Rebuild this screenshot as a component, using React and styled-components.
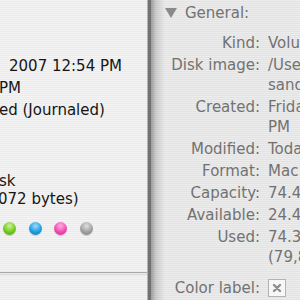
import React from "react"
import styled, { createGlobalStyle } from "styled-components"

const GlobalStyle = createGlobalStyle`
  html, body {
    margin: 0;
    padding: 0;
    overflow: hidden;
  }
  body {
    font-family: "DejaVu Sans", Verdana, sans-serif;
  }
`

const Screen = styled.div`
  display: flex;
  width: 300px;
  height: 300px;
  overflow: hidden;
`

// window in front, only its right part is visible
const FrontWindow = styled.div`
  flex: 0 0 147px;
  display: flex;
  flex-direction: column;
  border-right: 1px solid #b4b4b4;
  background: repeating-linear-gradient(to bottom, #f4f4f4 0 1px, #ebebeb 1px 2px);
  overflow: hidden;
  font-size: 15px;
  color: #161616;
`

const Group = styled.div`
  display: flex;
  flex-direction: column;
  margin-top: ${(p) => p.top}px;
  line-height: ${(p) => p.lh}px;
`

const Line = styled.div`
  white-space: nowrap;
  margin-left: ${(p) => p.indent || 0}px;
`

const Dots = styled.div`
  display: flex;
  gap: 12.5px;
  padding-left: 3px;
  margin-top: 14px;
`

const dotColors = {
  green: ["#cdf39a", "#72cb1e", "#4f9c12"],
  blue: ["#9edcfa", "#1d9de2", "#0e76b8"],
  pink: ["#ffb0e0", "#f24bb0", "#c82a88"],
  gray: ["#e0e0e0", "#a0a0a0", "#7c7c7c"],
}

const Dot = styled.span`
  width: 13px;
  height: 13px;
  border-radius: 50%;
  background: ${(p) => {
    const [a, b, c] = dotColors[p.color]
    return `radial-gradient(circle at 50% 30%, ${a} 0, ${b} 55%, ${c} 100%)`
  }};
  box-shadow: 0 1px 1px rgba(0, 0, 0, 0.15);
`

const Rule = styled.div`
  margin-top: 37px;
  height: 1px;
  border-top: 1px solid #a8a8a8;
  border-bottom: 1px solid #dcdcdc;
`

// inactive Get Info window behind
const InfoWindow = styled.div`
  flex: 1;
  display: flex;
  flex-direction: column;
  border-left: 3px solid #727272;
  background:
    linear-gradient(to right, rgba(0, 0, 0, 0.32), rgba(0, 0, 0, 0.12) 5px, rgba(0, 0, 0, 0) 14px),
    repeating-linear-gradient(to bottom, #ececec 0 1px, #e3e3e3 1px 2px);
  overflow: hidden;
  font-size: 15px;
  line-height: 20px;
  color: #727272;
`

const Header = styled.div`
  display: flex;
  align-items: center;
  gap: 8px;
  padding: 3px 0 0 14px;
`

const Triangle = styled.span`
  width: 0;
  height: 0;
  border-left: 6px solid transparent;
  border-right: 6px solid transparent;
  border-top: 10px solid #8a8a8a;
`

const Rows = styled.div`
  display: grid;
  grid-template-columns: 109px 1fr;
  column-gap: 8px;
  row-gap: 2px;
  margin-top: 10px;
`

const Label = styled.div`
  text-align: right;
  white-space: nowrap;
  margin-top: ${(p) => p.top || 0}px;
`

const Value = styled.div`
  white-space: nowrap;
  margin-top: ${(p) => p.top || 0}px;
`

const LabelBox = styled.span`
  display: flex;
  align-items: center;
  justify-content: center;
  width: 16px;
  height: 16px;
  margin-top: 1px;
  border: 1px solid #b2b2b2;
  background: #f7f7f7;
`

const info = [
  ["Kind:", ["Volume"]],
  ["Disk image:", ["/Users/", "sandbox/"]],
  ["Created:", ["Friday, June 1, 2007 12:54", "PM"]],
  ["Modified:", ["Today at 3:10 PM"]],
  ["Format:", ["Mac OS Extended"]],
  ["Capacity:", ["74.4 MB"]],
  ["Available:", ["24.4 MB"]],
  ["Used:", ["74.3 MB", "(79,843,072 bytes)"]],
]

const App = () => (
  <>
    <GlobalStyle />
    <Screen>
      <FrontWindow>
        <Group top={55} lh={22}>
          <Line indent={9}>2007 12:54 PM</Line>
          <Line indent={-1}>PM</Line>
          <Line indent={-1}>ed (Journaled)</Line>
        </Group>
        <Group top={51} lh={18}>
          <Line indent={-1}>sk</Line>
          <Line indent={-2}>072 bytes)</Line>
        </Group>
        <Dots>
          <Dot color="green" />
          <Dot color="blue" />
          <Dot color="pink" />
          <Dot color="gray" />
        </Dots>
        <Rule />
      </FrontWindow>

      <InfoWindow>
        <Header>
          <Triangle />
          General:
        </Header>
        <Rows>
          {info.map(([label, lines]) => (
            <React.Fragment key={label}>
              <Label>{label}</Label>
              <Value>
                {lines.map((l) => (
                  <div key={l}>{l}</div>
                ))}
              </Value>
            </React.Fragment>
          ))}
          <Label top={9}>Color label:</Label>
          <Value top={9}>
            <LabelBox>
              <svg width="10" height="10" viewBox="0 0 10 10">
                <path d="M2 2L8 8M8 2L2 8" stroke="#8c8c8c" strokeWidth="2.4" strokeLinecap="round" />
              </svg>
            </LabelBox>
          </Value>
        </Rows>
      </InfoWindow>
    </Screen>
  </>
)

export default App
